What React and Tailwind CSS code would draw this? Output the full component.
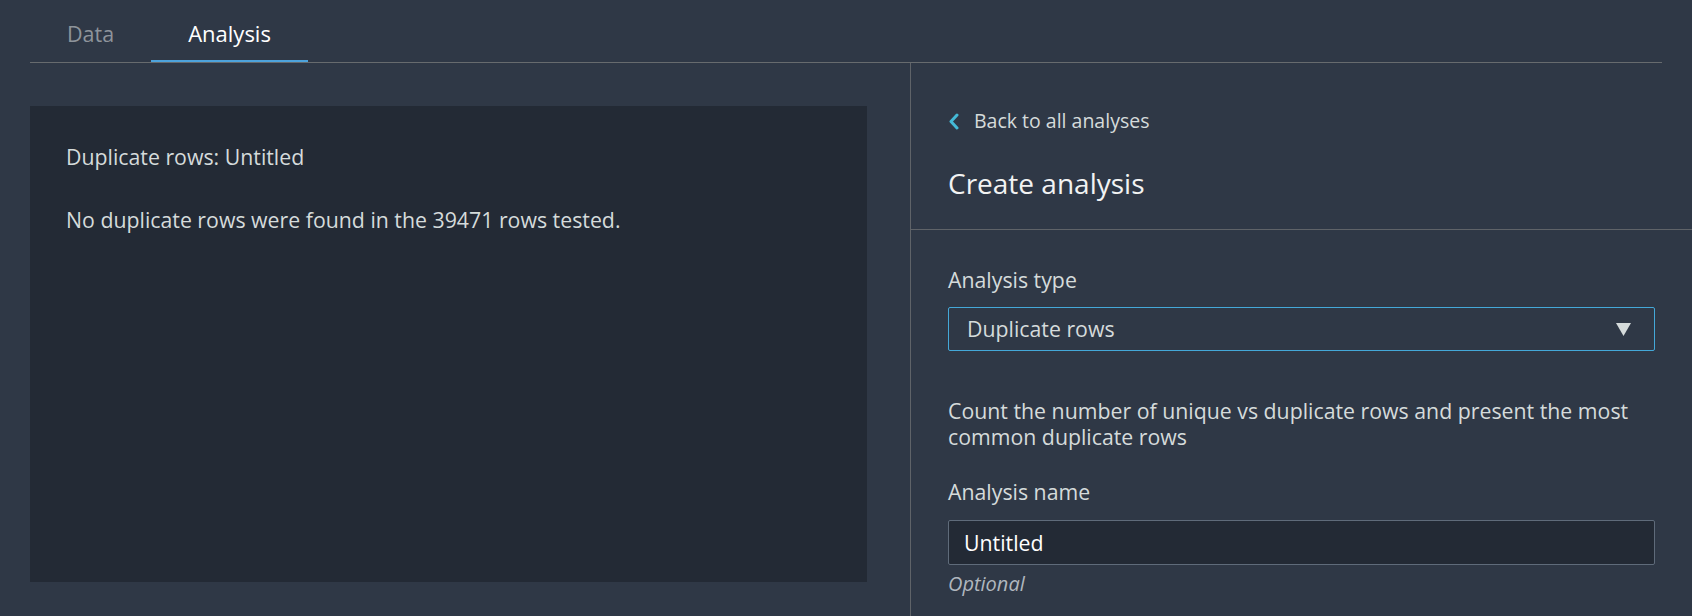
import React from "react";

function ChevronLeft() {
  return (
    <svg width="11" height="17" viewBox="0 0 11 17" fill="none" aria-hidden="true">
      <path d="M9 2 L3 8.5 L9 15" stroke="#44b9d6" strokeWidth="3" strokeLinecap="round" strokeLinejoin="round" />
    </svg>
  );
}

function CaretDown() {
  return (
    <svg width="15" height="13" viewBox="0 0 15 13" aria-hidden="true">
      <path d="M0 0 H15 L7.5 13 Z" fill="#d5dbdb" />
    </svg>
  );
}

export default function App() {
  return (
    <div className="w-full h-[616px] overflow-hidden bg-[#2f3846] flex flex-col font-['Open_Sans',sans-serif]">
      {/* Tabs */}
      <div className="mx-[30px] h-[63px] flex border-b border-[#676b6e] shrink-0">
        <div className="h-full px-[37px] pt-[7px] flex items-center text-[21.5px] text-[#8e949b]">Data</div>
        <div className="h-full px-[37px] pt-[7px] flex items-center text-[22px] text-white border-b-2 border-[#4da3dc]">
          Analysis
        </div>
      </div>

      <div className="flex flex-1 min-h-0">
        {/* Left area */}
        <div className="w-[910px] shrink-0 pl-[30px] pr-[43px] pt-[43px]">
          <div className="h-[476px] bg-[#232a35] pl-[36px] pt-[37px] text-[21.3px] leading-[28px] text-[#d5dbdb]">
            <div>Duplicate rows: Untitled</div>
            <div className="mt-[35px]">No duplicate rows were found in the 39471 rows tested.</div>
          </div>
        </div>

        {/* Right panel */}
        <div className="flex-1 border-l border-[#5f6368] flex flex-col">
          <div className="pt-[44px] px-[37px] pb-[28px] border-b border-[#5f6368]">
            <div className="flex items-center gap-[15px] h-[28px]">
              <ChevronLeft />
              <span className="text-[19.5px] leading-[28px] text-[#d5dbdb]">Back to all analyses</span>
            </div>
            <h2 className="mt-[30px] text-[28px] leading-[36px] text-[#f2f3f3]">Create analysis</h2>
          </div>

          <div className="px-[37px] pt-[36px] text-[21.3px] text-[#d5dbdb]">
            <div className="leading-[28px]">Analysis type</div>
            <div className="mt-[13px] h-[44px] border border-[#44a8d8] rounded-[2px] flex items-center justify-between pl-[18px] pr-[23px]">
              <span className="leading-[28px]">Duplicate rows</span>
              <CaretDown />
            </div>
            <p className="mt-[47px] leading-[26px]">
              Count the number of unique vs duplicate rows and present the most common duplicate rows
            </p>
            <div className="mt-[28px] leading-[28px]">Analysis name</div>
            <input
              readOnly
              value="Untitled"
              className="mt-[14px] w-full h-[45px] bg-[#232a35] border border-[#5f6b7a] rounded-[2px] pl-[15px] text-[21.3px] text-white outline-none"
            />
            <div className="mt-[6px] italic text-[20px] leading-[26px] text-[#b0b7bf]">Optional</div>
          </div>
        </div>
      </div>
    </div>
  );
}
